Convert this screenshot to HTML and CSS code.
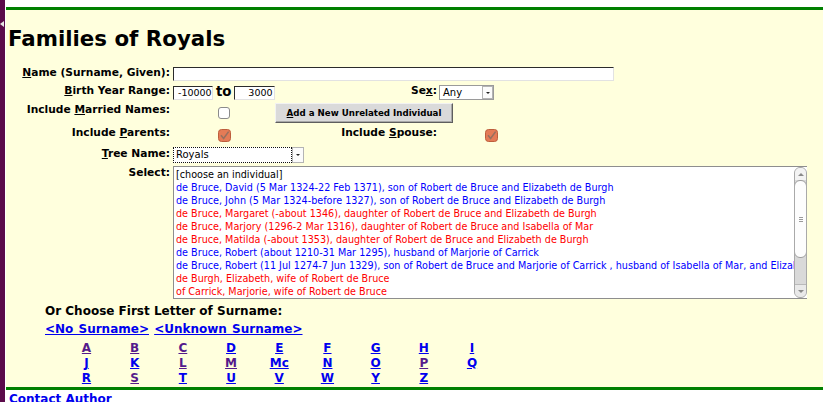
FILE: index.html
```html
<!DOCTYPE html>
<html>
<head>
<meta charset="utf-8">
<title>Families of Royals</title>
<link rel="stylesheet" href="styles.css">
</head>
<body>
<div class="page">
  <div class="side"><span class="tab"></span></div>
  <div class="gap"></div>
  <div class="main">
    <div class="top"></div>
    <div class="content">
      <h1 class="title">Families of Royals</h1>
      <div class="form">
        <div class="lbl r1"><u>N</u>ame (Surname, Given):</div>
        <div class="txt name r1"></div>

        <div class="lbl r2"><u>B</u>irth Year Range:</div>
        <div class="range r2"><span class="txt yr1">-10000</span><span class="to">to</span><span class="txt yr2">3000</span></div>
        <div class="lbl lbl3 r2">Se<u>x</u>:</div>
        <div class="sel any r2"><span class="val">Any</span><span class="arrow"></span></div>

        <div class="lbl r3">Include <u>M</u>arried Names:</div>
        <span class="cb married r3"></span>
        <div class="btn r3"><span><u>A</u>dd a New Unrelated Individual</span></div>

        <div class="lbl r4">Include <u>P</u>arents:</div>
        <svg class="chk parents r4" width="13" height="13" viewBox="0 0 13 13"><rect x="0.5" y="0.5" width="12" height="12" rx="3" fill="#e47b56" stroke="#bd5e3c"/><path d="M3 6.3 L5.6 9.4 L10.6 2.6" fill="none" stroke="#97705f" stroke-width="1.6"/></svg>
        <div class="lbl lbl3 r4">Include <u>S</u>pouse:</div>
        <svg class="chk spouse r4" width="13" height="13" viewBox="0 0 13 13"><rect x="0.5" y="0.5" width="12" height="12" rx="3" fill="#e47b56" stroke="#bd5e3c"/><path d="M3 6.3 L5.6 9.4 L10.6 2.6" fill="none" stroke="#97705f" stroke-width="1.6"/></svg>

        <div class="lbl r5"><u>T</u>ree Name:</div>
        <div class="sel tree r5"><span class="val">Royals</span><span class="arrow"></span></div>

        <div class="lbl r6">Select:</div>
        <div class="list r6">
          <div class="items">
            <div class="it">[choose an individual]</div>
            <div class="it m">de Bruce, David (5 Mar 1324-22 Feb 1371), son of Robert de Bruce and Elizabeth de Burgh</div>
            <div class="it m">de Bruce, John (5 Mar 1324-before 1327), son of Robert de Bruce and Elizabeth de Burgh</div>
            <div class="it f">de Bruce, Margaret (-about 1346), daughter of Robert de Bruce and Elizabeth de Burgh</div>
            <div class="it f">de Bruce, Marjory (1296-2 Mar 1316), daughter of Robert de Bruce and Isabella of Mar</div>
            <div class="it f">de Bruce, Matilda (-about 1353), daughter of Robert de Bruce and Elizabeth de Burgh</div>
            <div class="it m">de Bruce, Robert (about 1210-31 Mar 1295), husband of Marjorie of Carrick</div>
            <div class="it m">de Bruce, Robert (11 Jul 1274-7 Jun 1329), son of Robert de Bruce and Marjorie of Carrick , husband of Isabella of Mar, and Elizabeth de Burgh</div>
            <div class="it f">de Burgh, Elizabeth, wife of Robert de Bruce</div>
            <div class="it f">of Carrick, Marjorie, wife of Robert de Bruce</div>
          </div>
          <div class="sb">
            <div class="sb-up"><span class="tri-up"></span></div>
            <div class="sb-thumb"><span class="grip"></span><span class="grip"></span><span class="grip"></span></div>
            <div class="sb-track"></div>
            <div class="sb-down"><span class="tri-down"></span></div>
          </div>
        </div>
      </div>

      <div class="choose">Or Choose First Letter of Surname:</div>
      <div class="special"><a href="#">&lt;No Surname&gt;</a> <a href="#">&lt;Unknown Surname&gt;</a></div>
      <div class="letters">
        <a class="v" href="#">A</a><a class="v" href="#">B</a><a class="v" href="#">C</a><a href="#">D</a><a href="#">E</a><a href="#">F</a><a href="#">G</a><a href="#">H</a><a href="#">I</a>
        <a href="#">J</a><a href="#">K</a><a class="v" href="#">L</a><a class="v" href="#">M</a><a href="#">Mc</a><a href="#">N</a><a href="#">O</a><a class="v" href="#">P</a><a href="#">Q</a>
        <a href="#">R</a><a class="v" href="#">S</a><a href="#">T</a><a href="#">U</a><a href="#">V</a><a href="#">W</a><a href="#">Y</a><a href="#">Z</a>
      </div>
    </div>
    <div class="footer"><a href="#">Contact Author</a></div>
  </div>
</div>
</body>
</html>
```

FILE: styles.css
```css
* { box-sizing: border-box; }
html, body { margin: 0; padding: 0; }
body {
  width: 823px;
  height: 402px;
  overflow: hidden;
  background: #ffffff;
  color: #000;
  font-family: "DejaVu Sans", Verdana, sans-serif;
}
.page { display: flex; height: 402px; }
.side {
  width: 5px;
  flex: none;
  background: #5b0b4b;
  display: flex;
  flex-direction: column;
}
.tab {
  margin-top: 21px;
  width: 0;
  height: 0;
  border-right: 4px solid #e6e6e6;
  border-top: 3px solid transparent;
  border-bottom: 3px solid transparent;
}
.gap { width: 1px; flex: none; background: #fff; }
.main { flex: 1; min-width: 0; display: flex; flex-direction: column; }
.top { height: 7px; flex: none; }
.content {
  flex: none;
  height: 383px;
  border-top: 3px solid #008000;
  border-bottom: 3px solid #008000;
  background: #ffffdd;
  padding-top: 16px;
}
.title {
  margin: 0 0 0 2px;
  font-size: 21.33px;
  line-height: 25px;
  font-weight: bold;
}

/* form grid */
.form {
  margin-top: 15px;
  display: grid;
  grid-template-columns: 167px 102px 164px 1fr;
  grid-template-rows: 18px 19px 23px 21px 19px 133px;
  align-items: start;
  font-size: 10.667px;
  font-weight: bold;
  line-height: 13px;
}
.r1 { grid-row: 1; }
.r2 { grid-row: 2; }
.r3 { grid-row: 3; }
.r4 { grid-row: 4; }
.r5 { grid-row: 5; }
.r6 { grid-row: 6; }
.lbl {
  grid-column: 1;
  text-align: right;
  padding-right: 3px;
  white-space: nowrap;
}
.lbl3 { grid-column: 3; padding-right: 2px; }

.txt {
  display: block;
  background: #fff;
  border: 1px solid;
  border-color: #2b2b2b #e2e2e2 #e2e2e2 #2b2b2b;
  font-weight: normal;
  font-size: 9.5px;
  line-height: 12px;
  height: 14px;
  white-space: nowrap;
  overflow: hidden;
}
.name { grid-column: 2 / 5; width: 441px; margin-top: 1px; }
.range { grid-column: 2 / 4; display: flex; align-items: flex-start; }
.yr1 { width: 40px; margin-top: 2px; padding-left: 4px; }
.to { font-size: 13.33px; line-height: 14px; margin: 1px 0 0 3px; }
.yr2 { width: 41px; margin: 2px 0 0 2px; text-align: right; padding-right: 1px; }

.sel {
  display: flex;
  background: #fff;
  font-weight: normal;
  font-size: 10px;
}
.any {
  grid-column: 4;
  width: 55px;
  height: 15px;
  margin-top: 1px;
  border: 1px solid #9a9a9a;
}
.any .val { flex: 1; padding-left: 3px; line-height: 13px; }
.arrow {
  width: 11px;
  flex: none;
  border: 1px solid #b4b4b4;
  background: #fbfbfb;
  display: flex;
  align-items: center;
  justify-content: center;
}
.arrow::after {
  content: "";
  width: 0;
  height: 0;
  border-top: 2px solid #222;
  border-left: 2px solid transparent;
  border-right: 2px solid transparent;
}
.tree { grid-column: 2 / 5; width: 131px; height: 16px; }
.tree .val { flex: 1; border: 1px dotted #111; padding-left: 2px; line-height: 14px; }
.tree .arrow { width: 12px; }

.cb {
  display: block;
  width: 12px;
  height: 12px;
  border: 1px solid #8b8b8b;
  border-radius: 3px;
  background: #fff;
}
.married { grid-column: 2; justify-self: center; margin-top: 4px; }
.chk { display: block; }
.parents { grid-column: 2; justify-self: center; margin-top: 3px; }
.spouse { grid-column: 4; justify-self: start; margin: 3px 0 0 46px; }

.btn {
  grid-column: 3 / 5;
  justify-self: start;
  width: 178px;
  height: 20px;
  display: flex;
  align-items: center;
  justify-content: center;
  background: #dadada;
  border: 1px solid;
  border-color: #f2f2f2 #5e5e5e #5e5e5e #f2f2f2;
  box-shadow: inset -1px -1px 0 #a8a8a8;
  font-size: 8.67px;
  line-height: 11px;
  white-space: nowrap;
}

/* listbox */
.list {
  grid-column: 2 / 5;
  width: 634px;
  height: 133px;
  display: flex;
  background: #fff;
  border: 1px solid #8e8e8e;
  border-right: none;
}
.items {
  flex: 1;
  min-width: 0;
  overflow: hidden;
  padding: 1px 0 0 2px;
  font-weight: normal;
  font-size: 9.65px;
  line-height: 13px;
  white-space: nowrap;
  color: #000;
}
.it.m { color: #0000ff; }
.it.f { color: #ff0000; }

.sb {
  width: 13px;
  flex: none;
  display: flex;
  flex-direction: column;
  border: 1px solid #a9a9a9;
  border-radius: 6px;
  background: #d9d9d9;
  overflow: hidden;
}
.sb-up {
  height: 12px;
  flex: none;
  background: #f3f3f3;
  display: flex;
  align-items: center;
  justify-content: center;
}
.tri-up, .tri-down {
  width: 0;
  height: 0;
  border-left: 3px solid transparent;
  border-right: 3px solid transparent;
}
.tri-up { border-bottom: 3px solid #8a8a8a; }
.tri-down { border-top: 3px solid #8a8a8a; }
.sb-thumb {
  height: 78px;
  flex: none;
  background: #fdfdfd;
  border: 1px solid #9d9d9d;
  border-radius: 6px;
  margin: 0 -1px;
  display: flex;
  flex-direction: column;
  align-items: center;
  justify-content: center;
  gap: 1px;
}
.grip { width: 4px; height: 1px; background: #9a9a9a; }
.sb-track { flex: 1; }
.sb-down {
  height: 13px;
  flex: none;
  background: #e9e9e9;
  border-top: 1px solid #b9b9b9;
  display: flex;
  align-items: center;
  justify-content: center;
}

/* letters */
a { color: #0000ee; text-decoration: underline; }
a.v { color: #551a8b; }
.choose {
  margin: 5px 0 0 39px;
  font-size: 12px;
  font-weight: bold;
  line-height: 15px;
}
.special {
  margin: 3px 0 0 39px;
  font-size: 12px;
  font-weight: bold;
  line-height: 15px;
  word-spacing: 1px;
}
.letters {
  display: grid;
  grid-template-columns: repeat(9, 48.2px);
  margin: 4px 0 0 56.4px;
  font-size: 12px;
  font-weight: bold;
  line-height: 15px;
  text-align: center;
}
.letters a { justify-self: center; }
.footer {
  padding: 2px 0 0 3px;
  font-size: 12px;
  font-weight: bold;
  line-height: 15px;
}
.footer a { text-decoration: none; }
```
